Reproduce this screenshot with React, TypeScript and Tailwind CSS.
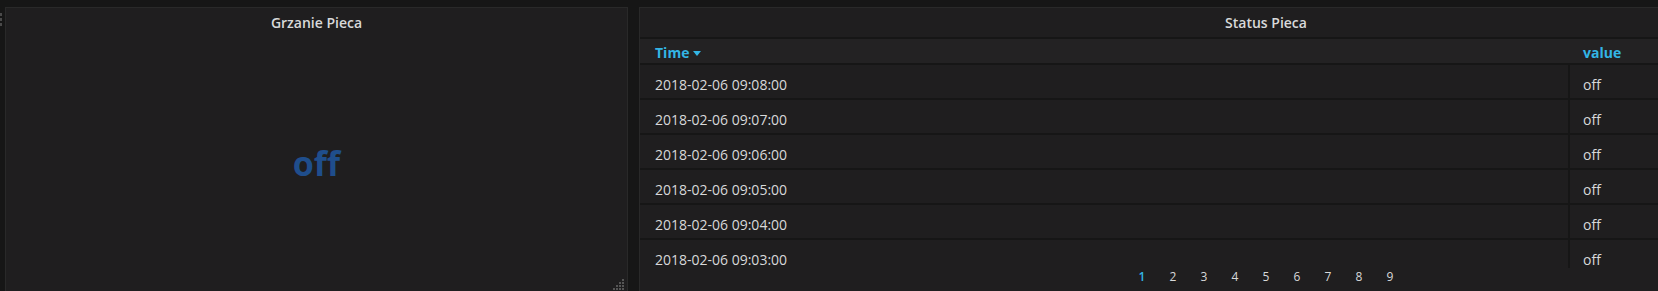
import React from "react";

const rows = [
  "2018-02-06 09:08:00",
  "2018-02-06 09:07:00",
  "2018-02-06 09:06:00",
  "2018-02-06 09:05:00",
  "2018-02-06 09:04:00",
  "2018-02-06 09:03:00",
];

const pages = [1, 2, 3, 4, 5, 6, 7, 8, 9];

function ResizeHandle() {
  // little dotted triangle in the bottom right corner of a panel
  const dots: [number, number][] = [
    [9, 0],
    [6, 3],
    [9, 3],
    [3, 6],
    [6, 6],
    [9, 6],
    [0, 9],
    [3, 9],
    [6, 9],
    [9, 9],
  ];
  return (
    <svg width="12" height="12" viewBox="0 0 12 12" className="absolute right-[2px] bottom-[2px]">
      {dots.map(([x, y], i) => (
        <rect key={i} x={x} y={y} width="2" height="2" fill="#555" />
      ))}
    </svg>
  );
}

export default function App() {
  return (
    <div className="relative h-[291px] w-[1658px] overflow-hidden bg-[#161616] font-['Open_Sans',sans-serif]">
      {/* drag handle at the far left */}
      <div className="absolute left-0 top-[13px] flex flex-col gap-[2px]">
        <div className="h-[3px] w-[2px] bg-[#4a4a4a]" />
        <div className="h-[3px] w-[2px] bg-[#4a4a4a]" />
        <div className="h-[3px] w-[2px] bg-[#4a4a4a]" />
      </div>

      <div className="flex gap-[11px] pl-[5px] pt-[7px]">
        {/* Grzanie Pieca */}
        <div className="relative flex h-[287px] w-[623px] shrink-0 flex-col border border-[#292929] bg-[#1f1e1f]">
          <div className="flex h-[29px] items-center justify-center text-[14px] font-semibold text-[#d8d9da]">
            Grzanie Pieca
          </div>
          <div className="flex flex-1 items-center justify-center pb-[4px]">
            <span className="text-[34px] font-bold leading-none text-[#1f4e8c]">off</span>
          </div>
          <ResizeHandle />
        </div>

        {/* Status Pieca */}
        <div className="flex h-[287px] w-[1254px] shrink-0 flex-col border border-[#292929] bg-[#1f1e1f]">
          <div className="flex h-[29px] items-center justify-center pt-[0px] text-[14px] font-semibold text-[#d8d9da]">
            Status Pieca
          </div>
          <div className="h-[231px] overflow-hidden border-t-2 border-[#161616]">
            <div className="flex h-[26px] items-center border-b-2 border-[#161616] bg-[#232223] pt-[3px] text-[14px] font-bold text-[#33b5e5]">
              <div className="flex w-[928px] items-center gap-[4px] pl-[15px]">
                Time
                <span className="mt-[1px] h-0 w-0 border-x-[4px] border-t-[5px] border-x-transparent border-t-[#33b5e5]" />
              </div>
              <div className="pl-[15px]">value</div>
            </div>
            {rows.map((t) => (
              <div key={t} className="flex h-[35px] items-stretch border-b-2 border-[#161616] text-[14px] text-[#d8d9da]">
                <div className="flex w-[928px] items-center pl-[15px] pt-[6px]">{t}</div>
                <div className="flex items-center border-l-2 border-[#161616] pl-[13px] pt-[6px]">off</div>
              </div>
            ))}
          </div>
          <div className="flex h-[18px] items-center justify-center text-[12px] text-[#d8d9da]">
            {pages.map((p) => (
              <span key={p} className={`w-[31px] text-center ${p === 1 ? "font-semibold text-[#33b5e5]" : ""}`}>
                {p}
              </span>
            ))}
          </div>
        </div>
      </div>
    </div>
  );
}
